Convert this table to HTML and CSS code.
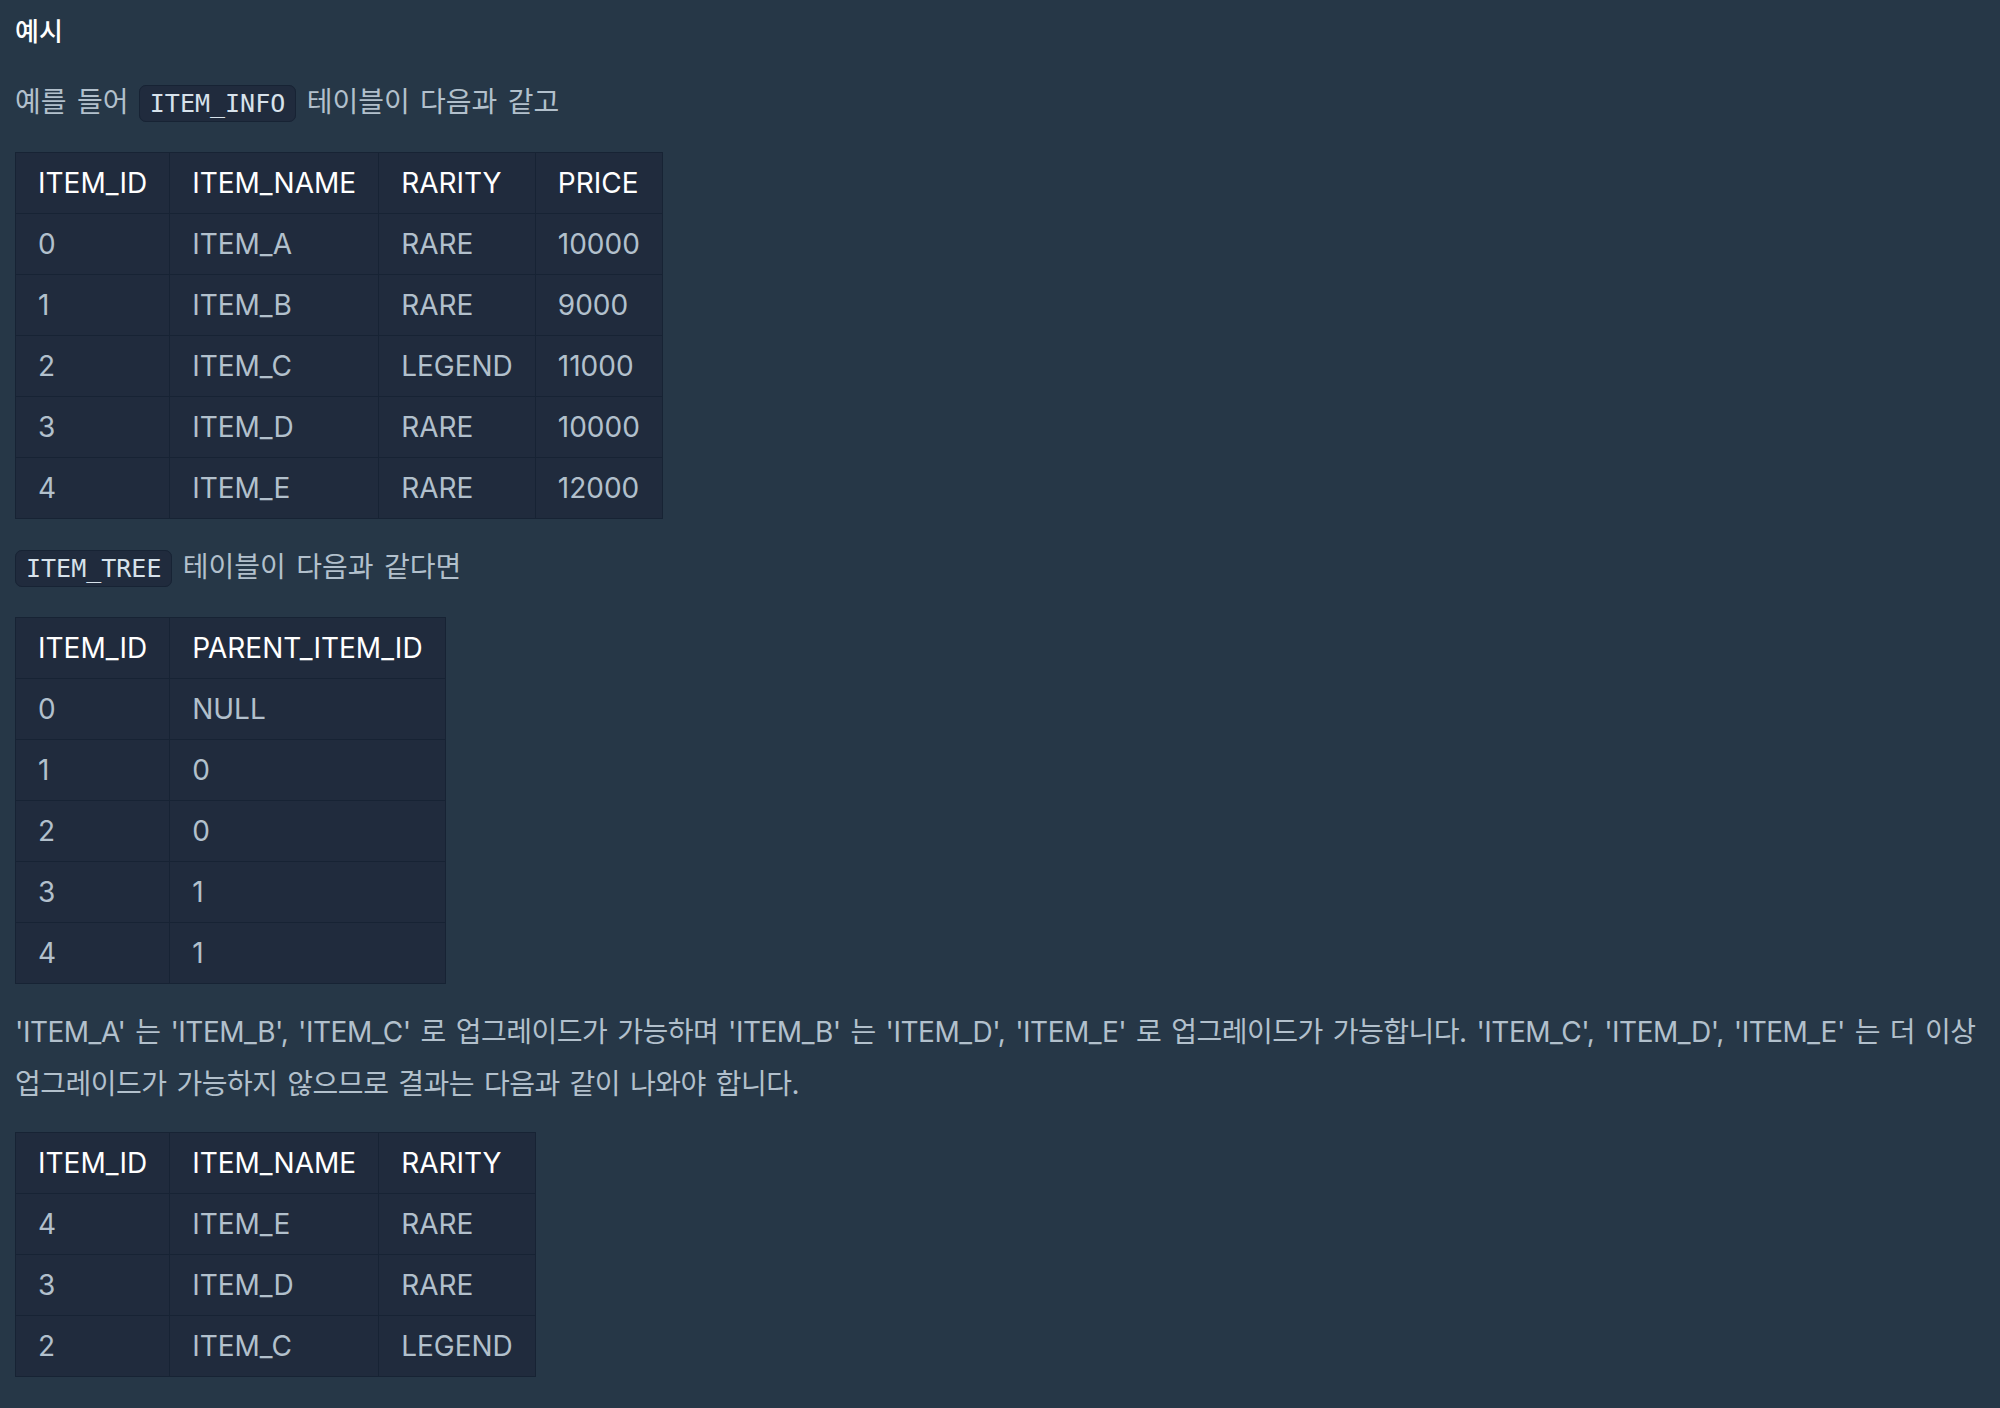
FILE: index.html
```html
<!DOCTYPE html>
<html lang="ko">
<head>
<meta charset="utf-8">
<link rel="stylesheet" href="styles.css">
</head>
<body>
<div class="content">
  <h5 class="title">예시</h5>
  <p class="para">예를 들어 <code>ITEM_INFO</code> 테이블이 다음과 같고</p>
  <table class="data">
    <thead>
      <tr><th>ITEM_ID</th><th>ITEM_NAME</th><th>RARITY</th><th>PRICE</th></tr>
    </thead>
    <tbody>
      <tr><td>0</td><td>ITEM_A</td><td>RARE</td><td>10000</td></tr>
      <tr><td>1</td><td>ITEM_B</td><td>RARE</td><td>9000</td></tr>
      <tr><td>2</td><td>ITEM_C</td><td>LEGEND</td><td>11000</td></tr>
      <tr><td>3</td><td>ITEM_D</td><td>RARE</td><td>10000</td></tr>
      <tr><td>4</td><td>ITEM_E</td><td>RARE</td><td>12000</td></tr>
    </tbody>
  </table>
  <p class="para"><code>ITEM_TREE</code> 테이블이 다음과 같다면</p>
  <table class="data">
    <thead>
      <tr><th>ITEM_ID</th><th>PARENT_ITEM_ID</th></tr>
    </thead>
    <tbody>
      <tr><td>0</td><td>NULL</td></tr>
      <tr><td>1</td><td>0</td></tr>
      <tr><td>2</td><td>0</td></tr>
      <tr><td>3</td><td>1</td></tr>
      <tr><td>4</td><td>1</td></tr>
    </tbody>
  </table>
  <p class="para tight">'ITEM_A' 는 'ITEM_B', 'ITEM_C' 로 업그레이드가 가능하며 'ITEM_B' 는 'ITEM_D', 'ITEM_E' 로 업그레이드가 가능합니다. 'ITEM_C', 'ITEM_D', 'ITEM_E' 는 더 이상 업그레이드가 가능하지 않으므로 결과는 다음과 같이 나와야 합니다.</p>
  <table class="data">
    <thead>
      <tr><th>ITEM_ID</th><th>ITEM_NAME</th><th>RARITY</th></tr>
    </thead>
    <tbody>
      <tr><td>4</td><td>ITEM_E</td><td>RARE</td></tr>
      <tr><td>3</td><td>ITEM_D</td><td>RARE</td></tr>
      <tr><td>2</td><td>ITEM_C</td><td>LEGEND</td></tr>
    </tbody>
  </table>
</div>
</body>
</html>
```
FILE: styles.css
```css
html, body {
  margin: 0;
  padding: 0;
  background: #263747;
}
body {
  font-family: Inter, "Noto Sans CJK KR", sans-serif;
  color: #b2c0cc;
  font-size: 28px;
}
.content {
  padding: 8px 10px 20px 15px;
}
.title {
  margin: 0;
  font-size: 26px;
  line-height: 48px;
  font-weight: 500;
  color: #ffffff;
}
.para {
  margin: 22px 0 22px 0;
  line-height: 52px;
  word-spacing: 2.5px;
}
.title + .para {
  margin-top: 20px;
}
.tight {
  letter-spacing: -0.5px;
}
code {
  font-family: "DejaVu Sans Mono", monospace;
  font-size: 25px;
  letter-spacing: 0;
  word-spacing: 0;
  color: #d7e2eb;
  background: #202b3d;
  border: 1px solid #172334;
  border-radius: 7px;
  padding: 3px 10px;
}
.data {
  border-collapse: collapse;
  background: #202b3d;
}
.data th, .data td {
  border: 1px solid #172334;
  padding: 8px 22px 7px 22px;
  line-height: 45px;
  text-align: left;
  font-weight: 400;
}
.data th {
  color: #ffffff;
}
.data td {
  color: #b2c0cc;
}
```
